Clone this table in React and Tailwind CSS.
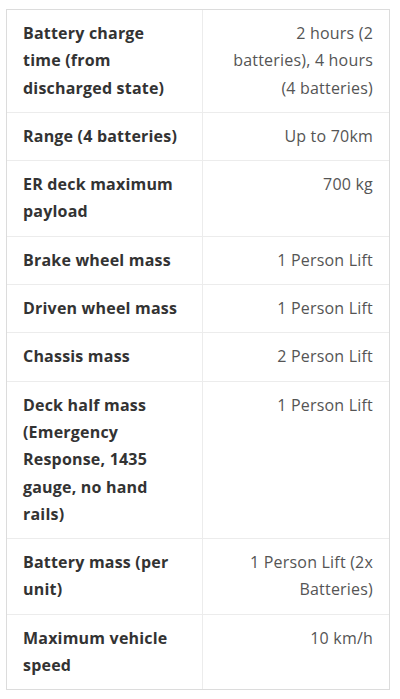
import React from 'react';

const specs = [
  { label: 'Battery charge time (from discharged state)', value: '2 hours (2 batteries), 4 hours (4 batteries)' },
  { label: 'Range (4 batteries)', value: 'Up to 70km' },
  { label: 'ER deck maximum payload', value: '700 kg' },
  { label: 'Brake wheel mass', value: '1 Person Lift' },
  { label: 'Driven wheel mass', value: '1 Person Lift' },
  { label: 'Chassis mass', value: '2 Person Lift' },
  { label: 'Deck half mass (Emergency Response, 1435 gauge, no hand rails)', value: '1 Person Lift' },
  { label: 'Battery mass (per unit)', value: '1 Person Lift (2x Batteries)' },
  { label: 'Maximum vehicle speed', value: '10 km/h' },
];

const SpecTable = ({ rows }) => (
  <div className="w-[384px] border border-[#dcdcdc] bg-white">
    {rows.map((row, i) => (
      <div
        key={i}
        className={`grid grid-cols-[195px_1fr] ${i > 0 ? 'border-t border-[#ececec]' : ''}`}
      >
        <div className="px-4 py-[10px] font-bold text-[#333]">{row.label}</div>
        <div className="border-l border-[#ececec] px-4 py-[10px] text-right text-[#555]">
          {row.value}
        </div>
      </div>
    ))}
  </div>
);

export default function App() {
  return (
    <div
      className="min-h-[699px] bg-white pt-[9px] pl-[6px] text-[16px] leading-[27.3px] tracking-[0.2px]"
      style={{ fontFamily: '"Open Sans", "Noto Sans", sans-serif' }}
    >
      <SpecTable rows={specs} />
    </div>
  );
}
